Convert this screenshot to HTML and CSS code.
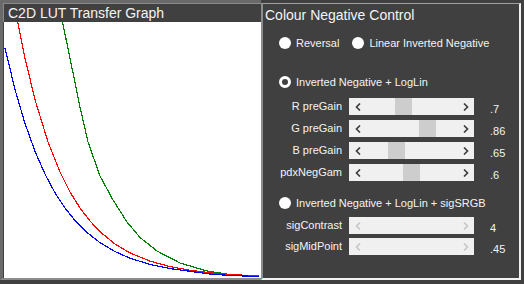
FILE: index.html
```html
<!DOCTYPE html>
<html lang="en">
<head>
    <meta charset="UTF-8">
    <title>C2D LUT</title>
    <link rel="stylesheet" href="styles.css">
</head>
<body>
    <div class="window">
        <!-- transfer graph -->
        <div class="graph">
            <div class="graph-title">C2D LUT Transfer Graph</div>
            <div class="plot">
                <svg width="256" height="256" viewBox="4 22 256 256" preserveAspectRatio="none">
                    <polyline class="curve" stroke="#008000" points="62.5,22 72,68 80,107 88,142 100,176 113,200 127,222 140,237.5 157,251 180,263 207,271 230,274.5 259,276.3"/>
                    <polyline class="curve" stroke="#ff0000" points="17.7,22 25,58 35,99.6 48,142 60,172 70,192 80,208 90,221 100,231.7 115,244 130,252.9 150,261.1 170,266.6 190,270.2 210,272.8 230,274.5 259,276"/>
                    <polyline class="curve" stroke="#0000ff" points="5,48 15,89.5 25,123.5 35,151.3 45,174.1 55,192.8 65,208 75,220.5 85,230.8 100,242.7 115,251.6 130,258.2 150,264.4 170,268.6 190,271.3 210,274 230,275.5 259,276.5"/>
                </svg>
            </div>
        </div>

        <!-- colour negative group -->
        <div class="group">
            <div class="group-title">Colour Negative Control</div>

            <div class="radio-row first">
                <span class="radio"><span class="dot"></span>Reversal</span>
                <span class="radio"><span class="dot"></span>Linear Inverted Negative</span>
            </div>

            <div class="radio-row second">
                <span class="radio"><span class="dot on"></span>Inverted Negative + LogLin</span>
            </div>

            <div class="sliders">
                <span class="label">R preGain</span>
                <div class="track">
                    <span class="arrow"><svg width="6" height="8" viewBox="0 0 6 8"><polyline points="5,0.5 1.5,4 5,7.5"/></svg></span>
                    <span class="thumb" style="left:46px"></span>
                    <span class="arrow"><svg width="6" height="8" viewBox="0 0 6 8"><polyline points="1,0.5 4.5,4 1,7.5"/></svg></span>
                </div>
                <span class="value">.7</span>

                <span class="label">G preGain</span>
                <div class="track">
                    <span class="arrow"><svg width="6" height="8" viewBox="0 0 6 8"><polyline points="5,0.5 1.5,4 5,7.5"/></svg></span>
                    <span class="thumb" style="left:70px"></span>
                    <span class="arrow"><svg width="6" height="8" viewBox="0 0 6 8"><polyline points="1,0.5 4.5,4 1,7.5"/></svg></span>
                </div>
                <span class="value">.86</span>

                <span class="label">B preGain</span>
                <div class="track">
                    <span class="arrow"><svg width="6" height="8" viewBox="0 0 6 8"><polyline points="5,0.5 1.5,4 5,7.5"/></svg></span>
                    <span class="thumb" style="left:39px"></span>
                    <span class="arrow"><svg width="6" height="8" viewBox="0 0 6 8"><polyline points="1,0.5 4.5,4 1,7.5"/></svg></span>
                </div>
                <span class="value">.65</span>

                <span class="label">pdxNegGam</span>
                <div class="track">
                    <span class="arrow"><svg width="6" height="8" viewBox="0 0 6 8"><polyline points="5,0.5 1.5,4 5,7.5"/></svg></span>
                    <span class="thumb" style="left:54px"></span>
                    <span class="arrow"><svg width="6" height="8" viewBox="0 0 6 8"><polyline points="1,0.5 4.5,4 1,7.5"/></svg></span>
                </div>
                <span class="value">.6</span>
            </div>

            <div class="radio-row third">
                <span class="radio"><span class="dot"></span>Inverted Negative + LogLin + sigSRGB</span>
            </div>

            <div class="sliders sig">
                <span class="label">sigContrast</span>
                <div class="track off">
                    <span class="arrow"><svg width="6" height="8" viewBox="0 0 6 8"><polyline points="5,0.5 1.5,4 5,7.5"/></svg></span>
                    <span class="arrow"><svg width="6" height="8" viewBox="0 0 6 8"><polyline points="1,0.5 4.5,4 1,7.5"/></svg></span>
                </div>
                <span class="value">4</span>

                <span class="label">sigMidPoint</span>
                <div class="track off">
                    <span class="arrow"><svg width="6" height="8" viewBox="0 0 6 8"><polyline points="5,0.5 1.5,4 5,7.5"/></svg></span>
                    <span class="arrow"><svg width="6" height="8" viewBox="0 0 6 8"><polyline points="1,0.5 4.5,4 1,7.5"/></svg></span>
                </div>
                <span class="value">.45</span>
            </div>
        </div>
    </div>
</body>
</html>
```

FILE: styles.css
```css
body {
    margin: 0;
    background-color: #404040;
    font-family: "Liberation Sans", Arial, sans-serif;
    color: #f4f4f4;
}

.window {
    display: flex;
    width: 524px;
    height: 284px;
}

/* graph panel */
.graph {
    box-sizing: border-box;
    width: 261px;
    height: 280px;
    border-top: 3px solid #6a6a6a;
    border-left: 3px solid #6a6a6a;
    border-bottom: 2px solid #8c8c8c;
    display: flex;
    flex-direction: column;
}

.graph-title {
    height: 18px;
    padding-left: 4px;
    border-top: 1px solid #8a8a8a;
    border-left: 1px solid #8a8a8a;
    background-color: #404040;
    font-size: 14px;
    line-height: 19px;
    white-space: nowrap;
}

.plot {
    flex: 1;
    margin-left: 1px;
    background-color: #fff;
    overflow: hidden;
}

.plot svg {
    display: block;
}

.curve {
    fill: none;
    stroke-width: 1.2;
    shape-rendering: crispEdges;
}

/* control group */
.group {
    box-sizing: border-box;
    width: 260px;
    height: 277px;
    margin-top: 3px;
    border-top: 1px solid #a0a0a0;
    border-left: 2px solid #8c8c8c;
    border-right: 2px solid #f2f2f2;
    border-bottom: 2px solid #f2f2f2;
    font-size: 11px;
}

.group-title {
    font-size: 14px;
    line-height: 16px;
    padding: 3px 0 0 2px;
}

.radio-row {
    display: flex;
    gap: 13px;
    height: 14px;
    line-height: 14px;
    padding-left: 16px;
}

.radio-row.first { margin-top: 13px; }
.radio-row.second { margin-top: 25px; }
.radio-row.third { margin-top: 15px; }

.radio {
    display: flex;
    align-items: center;
    gap: 5px;
    white-space: nowrap;
}

.dot {
    box-sizing: border-box;
    width: 12px;
    height: 12px;
    border-radius: 50%;
    background-color: #fff;
}

.dot.on {
    border: 3px solid #fff;
    background-color: #404040;
}

.sliders {
    display: grid;
    grid-template-columns: 79px 125px auto;
    grid-auto-rows: 17px;
    column-gap: 7px;
    row-gap: 5px;
    margin-top: 9px;
}

.sliders.sig {
    margin-top: 7px;
    row-gap: 4px;
}

.label {
    text-align: right;
    line-height: 17px;
    white-space: nowrap;
}

.value {
    padding: 5px 0 0 9px;
    line-height: 12px;
}

.track {
    position: relative;
    display: flex;
    justify-content: space-between;
    height: 17px;
    background-color: #f0f0f0;
}

.arrow {
    width: 17px;
    display: flex;
    align-items: center;
    justify-content: center;
}

.arrow svg {
    display: block;
}

.arrow polyline {
    fill: none;
    stroke: #3a3a3a;
    stroke-width: 1.6;
}

.track.off .arrow polyline {
    stroke: #c6c6c6;
}

.thumb {
    position: absolute;
    top: 0;
    width: 17px;
    height: 17px;
    background-color: #cdcdcd;
}
```
